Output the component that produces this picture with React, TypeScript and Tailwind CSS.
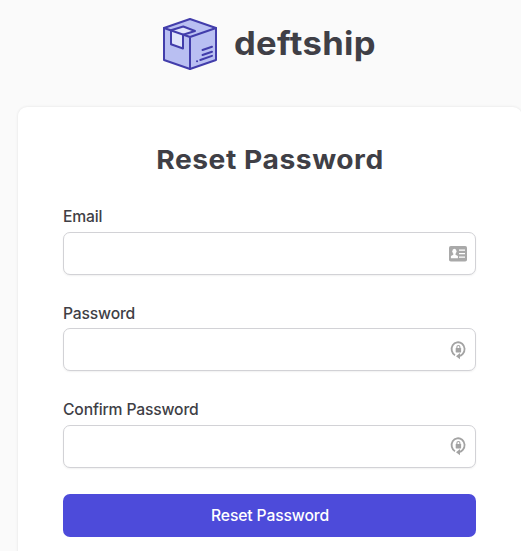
import React from "react";

function BoxLogo() {
  return (
    <svg width="56" height="54" viewBox="0 0 56 54" fill="none" strokeLinejoin="round" strokeLinecap="round">
      <path d="M28 2 54 11V43L28 52 2 43V11Z" fill="#b9bff2" />
      <path d="M9 13.3 21.3 9.5 33 14 21 17.7V31.5L9 27.3Z" fill="#e0e4fb" />
      <g stroke="#423dab" strokeWidth="2">
        <path d="M28 2 54 11V43L28 52 2 43V11Z" />
        <path d="M2 11 28 20 54 11M28 20V52" />
        <path d="M9 13.3V27.3L21 31.5V17.7L33 14 21.3 9.5 9 13.3" />
        <path d="M40.5 33 50 29.8M40.5 38 50 34.8M38.3 43 50 38.9M35 44.3h.1" />
      </g>
    </svg>
  );
}

function CardIcon() {
  return (
    <svg width="18" height="16" viewBox="0 0 18 16">
      <rect width="18" height="15.5" rx="1.8" fill="#a9a9a9" />
      <ellipse cx="5.4" cy="5.2" rx="2.1" ry="2.5" fill="#fff" />
      <path d="M4.3 7h2.2v1.8l2.4 1.3v2.2H1.9v-2.2l2.4-1.3Z" fill="#fff" />
      <path d="M10 4.2h6M10 7.7h6M10 11.2h6" stroke="#fff" strokeWidth="1.3" />
    </svg>
  );
}

function LockIcon() {
  return (
    <svg width="16" height="20" viewBox="0 0 16 20" fill="none" stroke="#a3a3a3">
      <path d="M5 15.2A6.5 6.9 0 1 1 12.8 13.9Q11.3 15.7 9 16" strokeWidth="1.8" />
      <path d="M10 13V19.3L6 16.2Z" fill="#a3a3a3" stroke="none" />
      <rect x="5.7" y="8" width="5.4" height="4.4" rx=".4" fill="#a3a3a3" stroke="none" />
      <path d="M6.9 8.3V7a1.5 1.5 0 0 1 3 0v1.3" strokeWidth="1.1" />
    </svg>
  );
}

function Field({ label, children }: { label: string; children: React.ReactNode }) {
  return (
    <label className="mb-[21.4px] block h-[75px]">
      <span className="block h-[32px] pt-[6.4px] text-[15.7px] leading-[22px] font-medium tracking-[-0.17px]">{label}</span>
      <span className="flex h-[43px] items-center justify-end rounded-[7px] border border-[#d2d2d6] bg-white shadow-[0_1px_2px_rgba(0,0,0,0.06)]">
        {children}
      </span>
    </label>
  );
}

export default function App() {
  return (
    <main className="h-[551px] w-[521px] overflow-hidden bg-[#fafafa] font-['Inter',sans-serif] text-[#3f3f46]">
      <header className="flex h-[107px] pt-[17px] pl-[162px]">
        <BoxLogo />
        <div className="ml-[16px] origin-left scale-x-[1.08] pt-[7px] text-[32px] leading-[40px] font-bold whitespace-nowrap tracking-[0.3px]">deftship</div>
      </header>
      <section className="ml-[18px] h-[500px] w-[504px] rounded-[9px] bg-white px-[45px] pt-[35px] shadow-[0_0_3px_rgba(0,0,0,0.1)]">
        <h1 className="mb-[22px] h-[36px] scale-x-[1.085] text-center text-[26px] leading-[36px] font-bold whitespace-nowrap tracking-[0.5px]">Reset Password</h1>
        <form className="w-[413px]">
          <Field label="Email"><span className="mr-[8px]"><CardIcon /></span></Field>
          <Field label="Password"><span className="mr-[9px]"><LockIcon /></span></Field>
          <Field label="Confirm Password"><span className="mr-[9px]"><LockIcon /></span></Field>
          <button type="button" className="mt-[26.4px] block h-[43px] w-full rounded-[7px] bg-[#4d4bda] pt-px pl-px text-[15.7px] font-medium tracking-[-0.13px] text-white">Reset Password</button>
        </form>
      </section>
    </main>
  );
}
